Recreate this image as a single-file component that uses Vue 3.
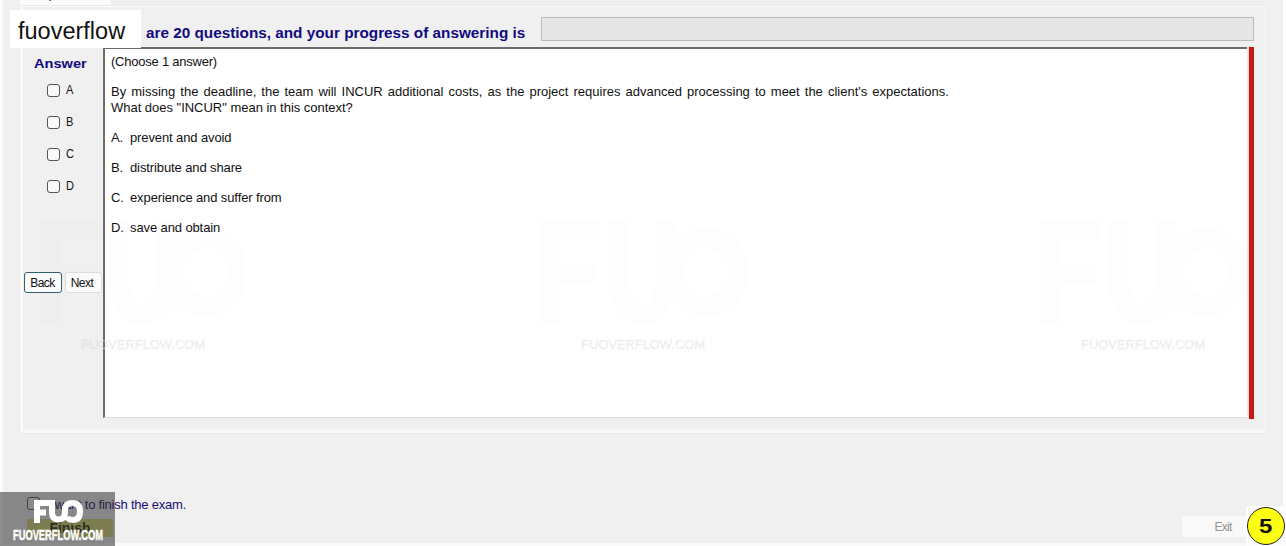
<script setup>
const answers = ['A', 'B', 'C', 'D']
const options = [
  { key: 'A.', text: 'prevent and avoid' },
  { key: 'B.', text: 'distribute and share' },
  { key: 'C.', text: 'experience and suffer from' },
  { key: 'D.', text: 'save and obtain' },
]
const marks = ['m1', 'm2', 'm3']
</script>

<template>
  <div class="page">
    <div class="tabs"><div class="tab"><i></i></div><div class="tabline"></div></div>
    <section class="group">
      <header class="head">
        <span class="progress-label">are 20 questions, and your progress of answering is</span>
        <div class="progress"></div>
      </header>
      <div class="body">
        <aside class="side">
          <h2>Answer</h2>
          <label v-for="a in answers" :key="a" class="choice"><span class="box"></span><span>{{ a }}</span></label>
          <div class="nav">
            <button class="btn back">Back</button>
            <button class="btn next">Next</button>
          </div>
        </aside>
        <main class="sheet">
          <p class="choose">(Choose 1 answer)</p>
          <p class="q1">By missing the deadline, the team will INCUR additional costs, as the project requires advanced processing to meet the client's expectations.</p>
          <p class="q2">What does "INCUR" mean in this context?</p>
          <div v-for="o in options" :key="o.key" class="opt"><span class="key">{{ o.key }}</span><span>{{ o.text }}</span></div>
        </main>
        <div class="redbar"></div>
      </div>
    </section>
    <footer class="foot">
      <div class="finish-col">
        <label class="finish-check"><span class="box"></span><span class="want">I want to finish the exam.</span></label>
        <button class="finish">Finish</button>
      </div>
      <button class="exit">Exit</button>
    </footer>

    <div class="brand">fuoverflow</div>
    <svg v-for="m in marks" :key="m" class="mark" :class="m" width="211" height="140" viewBox="0 0 211 140">
      <g fill="none" stroke="#000" opacity=".005" stroke-width="20">
        <path d="M15 114V19H66M25 62H60M84 9V70Q84 103 108 103Q130 103 130 70V9" />
        <circle cx="171" cy="61" r="34" />
      </g>
      <text x="46" y="138" textLength="124" lengthAdjust="spacingAndGlyphs">FUOVERFLOW.COM</text>
    </svg>
    <div class="stamp">
      <svg width="115" height="54" viewBox="0 0 115 54">
        <g fill="none" stroke="#fff" stroke-width="6">
          <path d="M37 31V11H50M37 20.500H46" />
          <path d="M52 8V20Q52 27.500 58.500 27.500Q65 27.500 65 20V14" />
          <path d="M65 17.500Q65.500 11 72.500 11Q80 11 80 19.500Q80 28 72.500 28Q68.500 28 67 25" />
        </g>
        <text x="13" y="48" textLength="90" lengthAdjust="spacingAndGlyphs">FUOVERFLOW.COM</text>
      </svg>
    </div>
    <div class="badge-bg"><div class="badge"><span>5</span></div></div>
  </div>
</template>

<style>
body { margin: 0; overflow: hidden; }
</style>
<style scoped>
.page { position: relative; box-sizing: border-box; width: 1286px; height: 546px; overflow: hidden; background: #f0f0f0; padding: 0 3px; box-shadow: inset 3px 0 #fbfbfb, inset -3px 0 #fdfdfd, inset 0 -3px #f9f9f9; font: 13px/16px "Liberation Sans", Arial, sans-serif; color: #111; display: flex; flex-direction: column; }
p, h2 { margin: 0; white-space: nowrap; }
button { box-sizing: border-box; padding: 0; margin: 0; font: inherit; color: inherit; border: 0; }
.tabs { display: flex; height: 6px; flex: none; padding-left: 17px; }
.tab { width: 91px; background: #fcfcfc; }
.tab i { display: block; width: 2px; height: 1px; margin-left: 29px; background: #777; }
.tabline { flex: 1; height: 5px; border-bottom: 1px solid #fafafa; margin-right: 14px; }
.group { box-sizing: border-box; width: 1246px; height: 427px; margin-left: 17px; border: 1px solid #fafafa; border-left-width: 3px; border-bottom: 3px solid #f7f7f7; box-shadow: 0 0 0 1px #ebebeb; flex: none; }
.head { display: flex; height: 40px; }
.progress-label { width: 395px; margin-left: 123px; padding-top: 18px; font-size: 14px; font-weight: bold; line-height: 17px; color: #110a80; white-space: nowrap; transform: scaleX(1.093); transform-origin: left; }
.progress { box-sizing: border-box; width: 713px; height: 24px; margin-top: 10px; border: 1px solid #bcbcbc; background: #e6e6e6; }
.body { display: flex; height: 371px; }
.side { width: 80px; }
h2 { padding: 8px 0 0; margin-left: 11px; height: 19px; font-size: 13.5px; line-height: 17px; color: #110a80; transform: scaleX(1.08); transform-origin: left; }
.choice { display: flex; height: 32px; align-items: center; padding-left: 24px; gap: 6px; font-size: 12px; }
.choice > span:last-child { margin-top: -1px; transform: scaleX(.92); transform-origin: left; }
.box { box-sizing: border-box; width: 13px; height: 13px; flex: none; border: 1px solid #555; border-radius: 3px; background: #f8f8f8; }
.nav { display: flex; gap: 3px; margin: 70px 0 0 1px; }
.btn { width: 38px; height: 21px; border: 1px solid #ddd; border-radius: 3px; background: #fcfcfc; font-size: 12px; letter-spacing: -.5px; }
.back { border-color: #34606b; padding-right: 1px; }
.next { width: 37px; padding-right: 3px; }
.sheet { box-sizing: border-box; width: 1144px; border-top: 2px solid #6b6b6b; border-left: 2px solid #6b6b6b; border-bottom: 1px solid #ddd; background: #fff; padding: 5px 0 0 6px; }
.choose { margin-bottom: 14px; letter-spacing: -.23px; }
.q1 { word-spacing: 1.45px; }
.q2 { margin-bottom: 14px; letter-spacing: -.02px; }
.opt { display: flex; margin-bottom: 14px; white-space: nowrap; letter-spacing: -.11px; }
.key { width: 19px; }
.redbar { width: 5px; height: 372px; background: #be1c17; box-shadow: -1px 0 2px #ffc5bb; margin-left: 2px; }
.foot { display: flex; justify-content: space-between; padding: 64px 35px 0 24px; }
.finish-check { display: flex; gap: 8px; height: 16px; color: #170d70; }
.want { white-space: nowrap; letter-spacing: -.22px; }
.finish { width: 86px; height: 18px; margin-top: 6px; background: #d8d878; color: #2c2e06; font-size: 14px; font-weight: bold; line-height: 16px; }
.exit { width: 66px; height: 21px; margin-top: 19px; padding-left: 16px; background: #f9f9f9; color: #929292; font-size: 12px; letter-spacing: -.7px; }
.brand { position: absolute; left: 10px; top: 10px; width: 131px; height: 38px; box-sizing: border-box; padding-left: 8px; background: #fff; color: #111; font-size: 23.5px; line-height: 43px; }
.mark { position: absolute; top: 211px; }
.mark text { font-size: 12px; fill: #fff; fill-opacity: .7; stroke: #000; stroke-opacity: .065; stroke-width: 1px; }
.m1 { left: 35px; }
.m2 { left: 535px; }
.m3 { left: 1035px; }
.stamp { position: absolute; left: 0; top: 492px; width: 115px; height: 54px; background: rgba(50, 50, 50, .55); }
.stamp svg { display: block; }
.stamp text { font-size: 14px; font-weight: bold; fill: #fff; stroke: #fff; stroke-width: .5px; }
.badge-bg { position: absolute; left: 1246px; top: 506px; width: 40px; height: 40px; background: #fcfcfc; display: flow-root; }
.badge { box-sizing: border-box; width: 38px; height: 38px; margin: 1px 0 0 1px; border: 1px solid #222; border-radius: 50%; background: #ffff12; text-align: center; font-size: 20px; font-weight: bold; line-height: 37px; }
.badge span { display: inline-block; transform: scaleX(1.2); }
</style>
